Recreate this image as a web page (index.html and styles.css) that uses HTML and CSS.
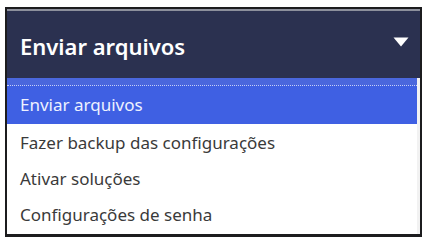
FILE: index.html
```html
<!DOCTYPE html>
<html lang="pt">
<head>
<meta charset="utf-8">
<title>Dropdown</title>
<link rel="stylesheet" href="styles.css">
</head>
<body>
<div class="frame">
  <div class="header">
    <span class="title">Enviar arquivos</span>
    <svg class="caret" width="16" height="10" viewBox="0 0 16 10"><path d="M0.5 0.5 H15.5 L8 9.5 Z" fill="#fff"/></svg>
  </div>
  <div class="list">
    <div class="band"></div>
    <div class="item selected">Enviar arquivos</div>
    <div class="item">Fazer backup das configurações</div>
    <div class="item">Ativar soluções</div>
    <div class="item">Configurações de senha</div>
  </div>
</div>
</body>
</html>
```
FILE: styles.css
```css
html, body {
  margin: 0;
  padding: 0;
  background: #ffffff;
}
body {
  padding: 7px 0 0 5px;
  font-family: "Noto Sans", "Open Sans", sans-serif;
}
.frame {
  width: 417px;
  height: 230px;
  box-sizing: border-box;
  border: 2px solid #1c1c1e;
  border-bottom-width: 3px;
  background: #ffffff;
  display: flex;
  flex-direction: column;
}
.header {
  height: 67px;
  flex: none;
  background: #2b3150;
  border-top: 2px solid #8d909c;
  display: flex;
  align-items: center;
  justify-content: space-between;
  padding: 0 11px 0 13px;
}
.title {
  color: #ffffff;
  font-size: 22px;
  font-weight: 600;
  line-height: 1;
  margin-top: 3px;
}
.caret {
  display: block;
  margin-top: -6px;
}
.list {
  flex: 1;
  display: flex;
  flex-direction: column;
  border-right: 3px solid #f2f2f2;
}
.band {
  height: 7px;
  background: #4a67dd;
}
.item {
  height: 36px;
  flex: none;
  display: flex;
  align-items: center;
  padding-left: 13px;
  font-size: 17px;
  color: #3a3a3a;
}
.item.selected {
  height: 39px;
  padding-bottom: 2px;
  box-sizing: border-box;
  background: #3f60e3;
  color: #eef1ff;
  border-top: 1px dotted #c8d0f5;
}
```
